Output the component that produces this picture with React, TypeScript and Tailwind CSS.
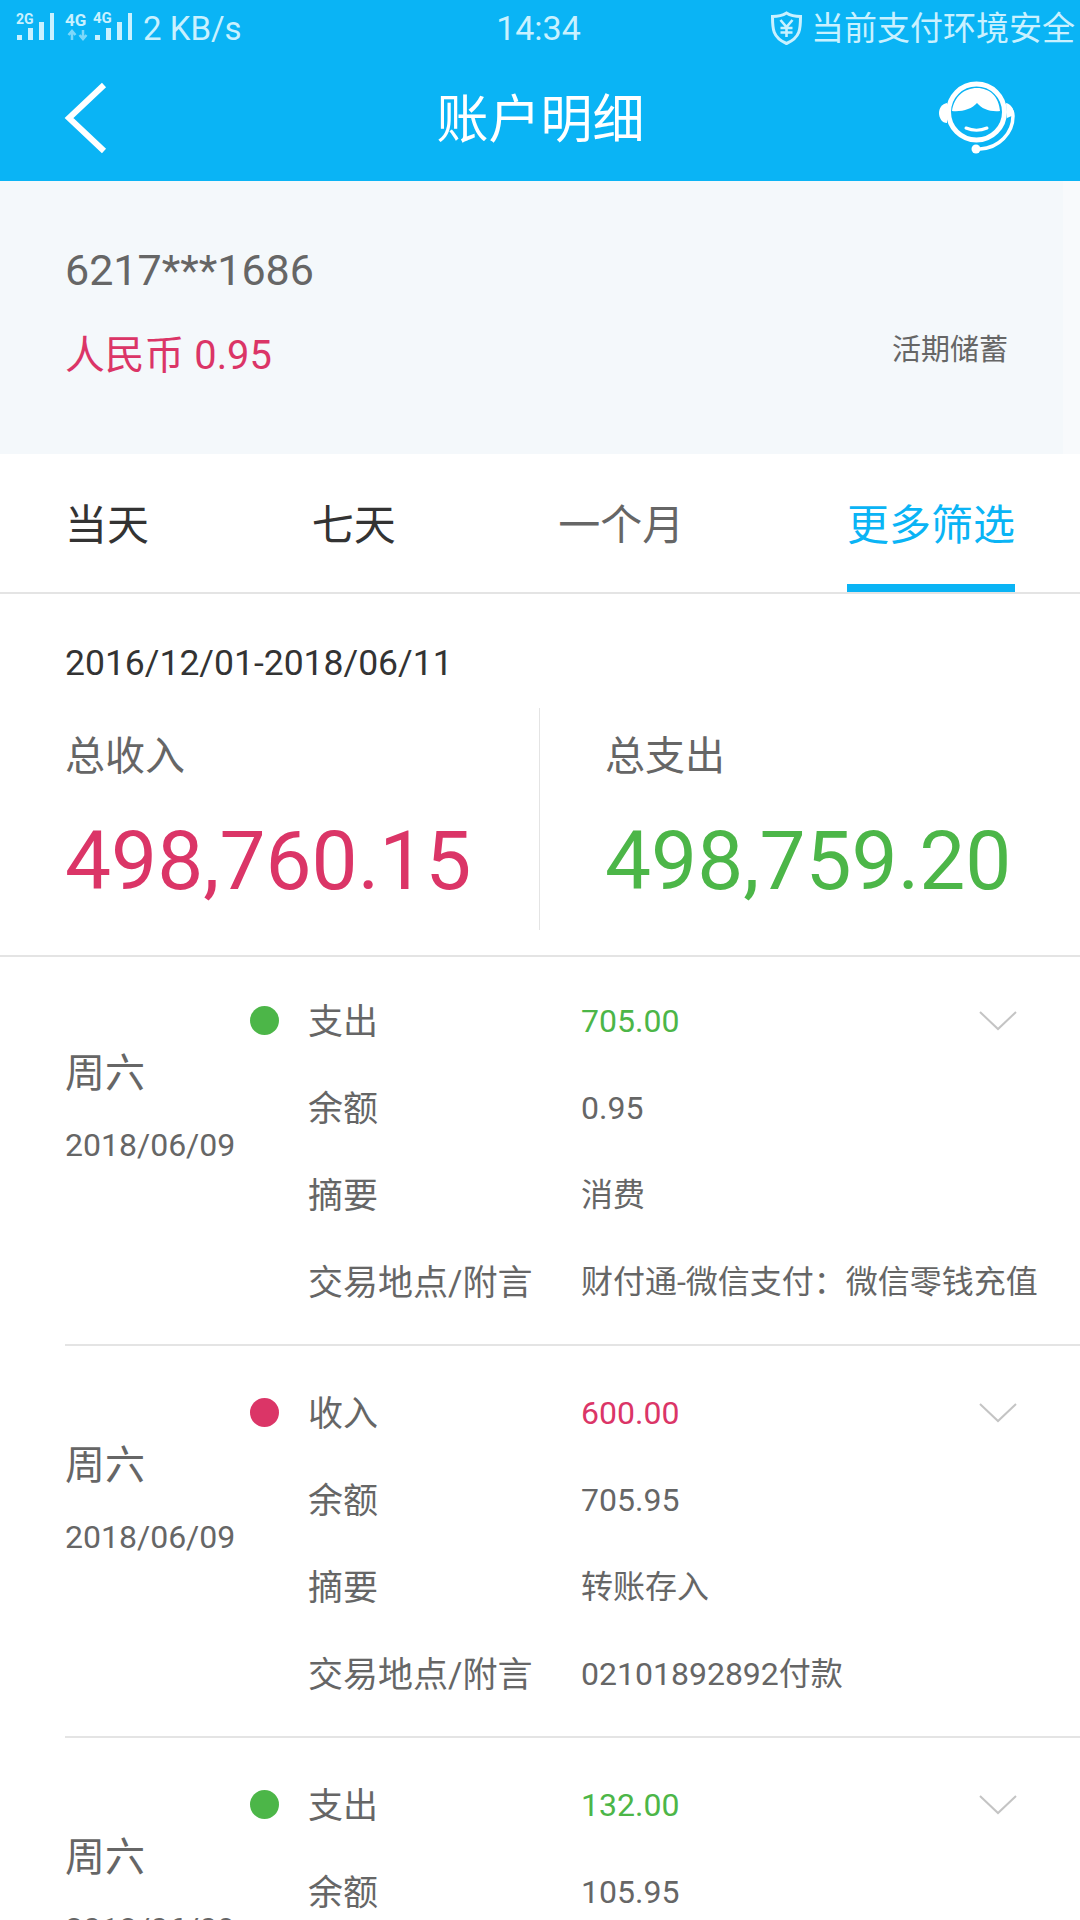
import React from "react";

function Bars({ x }: { x: number }) {
  return (
    <g fill="#c9f1ff">
      <rect x={x} y={35} width={5} height={5} />
      <rect x={x + 11} y={28} width={5} height={12} />
      <rect x={x + 22} y={22} width={5} height={18} />
      <rect x={x + 33} y={13} width={4} height={27} />
    </g>
  );
}

function Signals() {
  return (
    <svg width="134" height="56" viewBox="0 0 134 56" className="block shrink-0">
      <text x="16" y="24" fontSize="14" fontWeight="700" fill="#c9f1ff" fontFamily="Roboto">2G</text>
      <Bars x={17} />
      <text x="65" y="26" fontSize="17" fontWeight="700" fill="#c9f1ff" fontFamily="Roboto">4G</text>
      <path d="M72 40v-8M68.500 35l3.500-4 3.500 4M83 30v8M79.500 35l3.500 4 3.500-4" stroke="#7dd8fa" strokeWidth="2.500" fill="none" />
      <text x="93" y="23" fontSize="15" fontWeight="700" fill="#c9f1ff" fontFamily="Roboto">4G</text>
      <Bars x={95} />
    </svg>
  );
}

function Shield() {
  return (
    <svg width="33" height="34" viewBox="0 0 33 34" className="block shrink-0">
      <path d="M16.500 2c4 2.500 9 3.500 14 3.500 0 12 0 21-14 27C2.500 26.500 2.500 17.500 2.500 5.500c5 0 10-1 14-3.500z" fill="none" stroke="#c9f1ff" strokeWidth="3" />
      <path d="M10.500 9l6 7 6-7M16.500 16v10M10.500 17h12M10.500 21.500h12" fill="none" stroke="#c9f1ff" strokeWidth="2.600" />
    </svg>
  );
}

function Agent() {
  return (
    <svg width="84" height="80" viewBox="10 8 84 80" className="block" fill="none">
      <circle cx="52.500" cy="41" r="28" stroke="#fff" strokeWidth="5" />
      <path d="M23 32c-5 1-8 5-8 10s3 10 8 10z" fill="#fff" />
      <path d="M85 36c3 3 4 6 4 9 0 17-14 32-33 33" stroke="#fff" strokeWidth="3.500" />
      <path d="M82 32c5 1 8 6 8 12l-7 3z" fill="#fff" />
      <circle cx="52" cy="78" r="4.500" fill="#fff" />
      <path d="M28 40c2-14 12-23 25-23s22 9 23 23c-10 1-18-2-23-8-5 6-15 9-25 8z" fill="#fff" />
      <path d="M42 57c7 3 14 3 21 0" stroke="#fff" strokeWidth="3" strokeLinecap="round" />
    </svg>
  );
}

type Row = {
  kind: string;
  amount: string;
  balance: string;
  memo: string;
  place: string;
  date: string;
  dot: string;
  color: string;
  box: string;
};

const rows: Row[] = [
  { kind: "支出", amount: "705.00", balance: "0.95", memo: "消费", place: "财付通-微信支付\uFF1A微信零钱充值", date: "2018/06/09", dot: "bg-[#4cb648]", color: "text-[#4cb648]", box: "h-[389px] pt-[20px]" },
  { kind: "收入", amount: "600.00", balance: "705.95", memo: "转账存入", place: "02101892892付款", date: "2018/06/09", dot: "bg-[#db3567]", color: "text-[#db3567]", box: "h-[392px] pt-[23px]" },
  { kind: "支出", amount: "132.00", balance: "105.95", memo: "消费", place: "财付通-微信支付", date: "2018/06/09", dot: "bg-[#4cb648]", color: "text-[#4cb648]", box: "h-[392px] pt-[23px]" },
];

function Detail({ label, value, valueClass, chevron }: { label: string; value: string; valueClass?: string; chevron?: boolean }) {
  return (
    <div className="flex h-[87px] items-center">
      <div className="w-[273px] shrink-0 pt-[5px] text-[35px] text-[#666666]">{label}</div>
      <div className={`whitespace-nowrap text-[32px] ${valueClass ?? "text-[#666666]"}`}>{value}</div>
      {chevron && (
        <svg width="40" height="22" viewBox="0 0 40 22" className="ml-auto mr-[62px] block shrink-0">
          <path d="M2 2l18 17L38 2" fill="none" stroke="#c4c4c4" strokeWidth="2" />
        </svg>
      )}
    </div>
  );
}

export default function App() {
  return (
    <div className="h-[1920px] w-[1080px] overflow-hidden bg-white font-['Roboto','Noto_Sans_CJK_SC',sans-serif] text-[#666666]">
      <header className="h-[181px] bg-[#0ab4f5]">
        <div className="grid h-[56px] grid-cols-3 items-center text-[33px] leading-none text-[#c9f1ff]">
          <div className="flex items-center">
            <Signals />
            <span className="ml-[9px] whitespace-nowrap">2 KB/s</span>
          </div>
          <div className="pr-[3px] text-center text-[34px]">14:34</div>
          <div className="flex items-center justify-end gap-[8px] whitespace-nowrap pr-[5px]">
            <Shield />
            <span>当前支付环境安全</span>
          </div>
        </div>
        <div className="grid h-[125px] grid-cols-[1fr_auto_1fr] items-center pl-[63px] pr-[62px]">
          <svg width="44" height="72" viewBox="0 0 44 72" className="-mt-[2px] block">
            <path d="M41 3L6 36l35 33" fill="none" stroke="#fff" strokeWidth="6" />
          </svg>
          <div className="pt-[5px] text-[52px] leading-none text-white">账户明细</div>
          <div className="justify-self-end">
            <Agent />
          </div>
        </div>
      </header>

      <section className="flex h-[273px] bg-[#f4f8fb]">
        <div className="flex-1 pl-[65px] pr-[55px] pt-[64px]">
          <div className="text-[43px] leading-[50px]">6217***1686</div>
          <div className="mt-[32px] flex items-center justify-between">
            <div className="pt-[4px] text-[39.800px] leading-[50px] text-[#db3567]">人民币 0.95</div>
            <div className="-mt-[8px] text-[29px] leading-[50px]">活期储蓄</div>
          </div>
        </div>
        <div className="w-[17px] bg-[#f8fafc]" />
      </section>

      <nav className="flex h-[140px] justify-between border-b-2 border-[#e4e4e4] px-[65px] pt-[4px] text-[42px]">
        <div className="flex items-center text-[#333333]">当天</div>
        <div className="flex items-center text-[#333333]">七天</div>
        <div className="flex items-center text-[#666666]">一个月</div>
        <div className="flex items-center border-b-[8px] border-t-[8px] border-b-[#0ab4f5] border-t-transparent text-[#0ab4f5]">更多筛选</div>
      </nav>

      <section className="border-b-2 border-[#e4e4e4] pb-[25px]">
        <div className="pl-[65px] pt-[44px] text-[35.500px] leading-[50px] text-[#333333]">2016/12/01-2018/06/11</div>
        <div className="mt-[20px] flex h-[222px]">
          <div className="w-[540px] border-r border-[#e4e4e4] pl-[65px] pt-[24px]">
            <div className="text-[40px] leading-[50px]">总收入</div>
            <div className="mt-[29px] text-[82px] leading-[100px] text-[#db3567]">498,760.15</div>
          </div>
          <div className="flex-1 pl-[65px] pt-[24px]">
            <div className="text-[40px] leading-[50px]">总支出</div>
            <div className="mt-[29px] text-[82px] leading-[100px] text-[#4cb648]">498,759.20</div>
          </div>
        </div>
      </section>

      <section className="pl-[65px]">
        {rows.map((r, i) => (
          <div key={i} className={`flex border-b-2 border-[#e4e4e4] ${r.box}`}>
            <div className="w-[185px] shrink-0 pt-[72px]">
              <div className="text-[40px] leading-[50px]">周六</div>
              <div className="mt-[26px] text-[32px] leading-[40px]">{r.date}</div>
            </div>
            <div className="w-[58px] shrink-0 pt-[29px]">
              <div className={`h-[29px] w-[29px] rounded-full ${r.dot}`} />
            </div>
            <div className="flex-1">
              <Detail label={r.kind} value={r.amount} valueClass={r.color} chevron />
              <Detail label="余额" value={r.balance} />
              <Detail label="摘要" value={r.memo} />
              <Detail label="交易地点/附言" value={r.place} />
            </div>
          </div>
        ))}
      </section>
    </div>
  );
}
